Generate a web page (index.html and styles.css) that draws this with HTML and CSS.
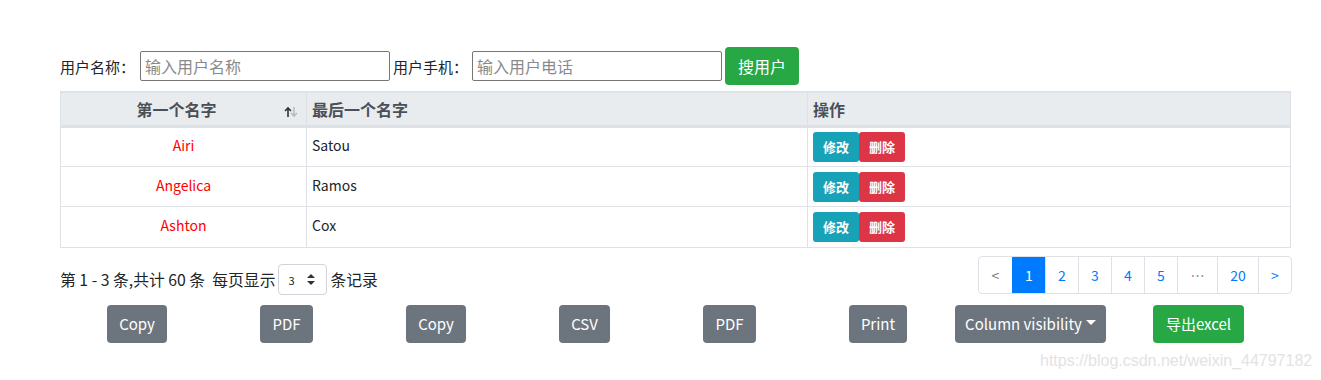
FILE: index.html
```html
<!DOCTYPE html>
<html>
<head>
<meta charset="utf-8">
<link rel="stylesheet" href="styles.css">
</head>
<body>
<div class="page">
  <form class="search">
    <label class="lbl">用户名称：</label>
    <input class="inp" type="text" placeholder="输入用户名称">
    <label class="lbl">用户手机：</label>
    <input class="inp" type="text" placeholder="输入用户电话">
    <button type="button" class="btn btn-success btn-search">搜用户</button>
  </form>

  <table class="tbl">
    <thead>
      <tr>
        <th class="c1 sorting">第一个名字
          <svg class="sort" width="14" height="12" viewBox="0 0 14 12">
            <path d="M4 11V2M1 5l3-3 3 3" stroke="#333" stroke-width="1.6" fill="none"/>
            <path d="M10 1v9M7 7l3 3 3-3" stroke="#bbb" stroke-width="1.6" fill="none"/>
          </svg>
        </th>
        <th class="c2">最后一个名字</th>
        <th class="c3">操作</th>
      </tr>
    </thead>
    <tbody>
      <tr><td class="c1 red">Airi</td><td class="c2">Satou</td><td class="c3"><span class="btn-sm info">修改</span><span class="btn-sm danger">删除</span></td></tr>
      <tr><td class="c1 red">Angelica</td><td class="c2">Ramos</td><td class="c3"><span class="btn-sm info">修改</span><span class="btn-sm danger">删除</span></td></tr>
      <tr><td class="c1 red">Ashton</td><td class="c2">Cox</td><td class="c3"><span class="btn-sm info">修改</span><span class="btn-sm danger">删除</span></td></tr>
    </tbody>
  </table>

  <div class="footer">
    <div class="info-text">第 1 - 3 条,共计 60 条 &nbsp;每页显示<span class="sel">3<svg width="8" height="11" viewBox="0 0 8 11"><path d="M4 0L8 4H0z M4 11L0 7h8z" fill="#333"/></svg></span>条记录</div>
    <ul class="pager">
      <li class="pg">&lt;</li>
      <li class="pg active">1</li>
      <li class="pg">2</li>
      <li class="pg">3</li>
      <li class="pg">4</li>
      <li class="pg">5</li>
      <li class="pg dots">…</li>
      <li class="pg wide">20</li>
      <li class="pg">&gt;</li>
    </ul>
  </div>

  <div class="tools">
    <span class="btn btn-secondary g w60">Copy</span>
    <span class="btn btn-secondary g w53">PDF</span>
    <span class="btn btn-secondary g w60">Copy</span>
    <span class="btn btn-secondary g w51">CSV</span>
    <span class="btn btn-secondary g w53">PDF</span>
    <span class="btn btn-secondary g last w58">Print</span>
    <span class="btn btn-secondary g2 w151">Column visibility<span class="caret"></span></span>
    <span class="btn btn-success g2 w91">导出excel</span>
  </div>
</div>
<div class="watermark">https://blog.csdn.net/weixin_44797182</div>
</body>
</html>
```

FILE: styles.css
```css
* { box-sizing: border-box; }
html, body { margin: 0; padding: 0; background: #fff; }
body {
  font-family: "Noto Sans CJK SC", "Noto Sans", sans-serif;
  font-size: 14px;
  color: #212529;
  width: 1321px;
  height: 380px;
  position: relative;
  overflow: hidden;
}
.page { padding: 47px 30px 0 60px; }

.search { display: flex; align-items: center; height: 38px; margin: 0; }
.lbl { font-size: 15px; color: #212529; margin-right: 5px; white-space: nowrap; }
.lbl + .inp + .lbl { margin-right: 4px; }
.inp {
  width: 250px; height: 30px; border: 1px solid #767676; border-radius: 2px;
  font-family: inherit; font-size: 16px; padding: 0 4px; margin-right: 3px;
  color: #212529;
}
.inp::placeholder { color: #8a8a8a; }
.btn {
  display: inline-flex; align-items: center; justify-content: center;
  border-radius: 4px; color: #fff; font-family: inherit; border: 0; white-space: nowrap;
}
.btn-success { background: #28a745; }
.btn-secondary { background: #6c757d; }
.btn-search { width: 74px; height: 38px; font-size: 16px; padding: 0; margin-left: 0; }

.tbl {
  width: 1231px; border-collapse: collapse; margin-top: 6px;
  border: 1px solid #dee2e6;
}
.tbl th {
  background: #e9ecef; color: #495057; font-weight: bold; font-size: 16px;
  height: 34px; text-align: left; padding: 0 5px;
  border: 1px solid #dee2e6; border-top: 2px solid #dee2e6; border-bottom: 3px solid #dee2e6;
}
.tbl th.c1 { text-align: center; position: relative; padding-right: 19px; }
.sort { position: absolute; right: 8px; top: 13px; }
.tbl td { height: 40.4px; border: 1px solid #dee2e6; padding: 0 5px; font-size: 14px; vertical-align: middle; padding-bottom: 3px; }
.tbl td.c1 { text-align: center; }
.tbl td.c3 { padding-bottom: 0; }
.c1 { width: 246px; }
.c2 { width: 501px; }
.red { color: #ff0000; }
.btn-sm {
  display: inline-flex; align-items: center; justify-content: center;
  width: 46px; height: 30px; color: #fff; font-size: 13px; font-weight: bold;
  border-radius: 3px; vertical-align: middle;
}
.info { background: #17a2b8; }
.danger { background: #dc3545; }

.footer { display: flex; justify-content: space-between; align-items: center; margin-top: 8px; width: 1232px; height: 38px; }
.info-text { font-size: 15.8px; display: flex; align-items: center; padding-top: 10px; }
.sel {
  display: inline-flex; align-items: center; justify-content: space-between;
  width: 49px; height: 31px; border: 1px solid #ced4da; border-radius: 4px;
  font-size: 11px; padding: 0 11px 0 9px; margin: 0 3px 0 3px; color: #212529;
}
.pager { list-style: none; display: flex; margin: 0; padding: 0; border: 1px solid #dee2e6; border-radius: 4px; height: 38px; }
.pg {
  width: 33px; display: flex; align-items: center; justify-content: center;
  color: #007bff; font-size: 14px; border-left: 1px solid #dee2e6;
}
.pg:first-child { border-left: 0; color: #6c757d; }
.pg.active { background: #007bff; color: #fff; border-left-color: #007bff; }
.pg.dots { width: 40px; color: #6c757d; }
.pg.wide { width: 41px; }

.tools { display: flex; align-items: center; margin-top: 11px; padding-left: 47px; height: 38px; }
.tools .btn { height: 38px; font-size: 15px; padding: 0; }
.tools .g { margin-right: 93px; }
.tools .g.last { margin-right: 48px; }
.tools .g2 { margin-right: 47px; }
.w51 { width: 51px; } .w53 { width: 53px; } .w58 { width: 58px; } .w60 { width: 60px; }
.w91 { width: 91px; } .w151 { width: 151px; }
.caret {
  display: inline-block; width: 0; height: 0; margin-left: 4px; margin-top: -2px;
  border-left: 5px solid transparent; border-right: 5px solid transparent; border-top: 5px solid #fff;
}
.watermark {
  position: absolute; left: 1040px; top: 352px; font-family: "Liberation Sans", Arial, sans-serif;
  font-size: 16px; color: #e3e3e3;
}
```
